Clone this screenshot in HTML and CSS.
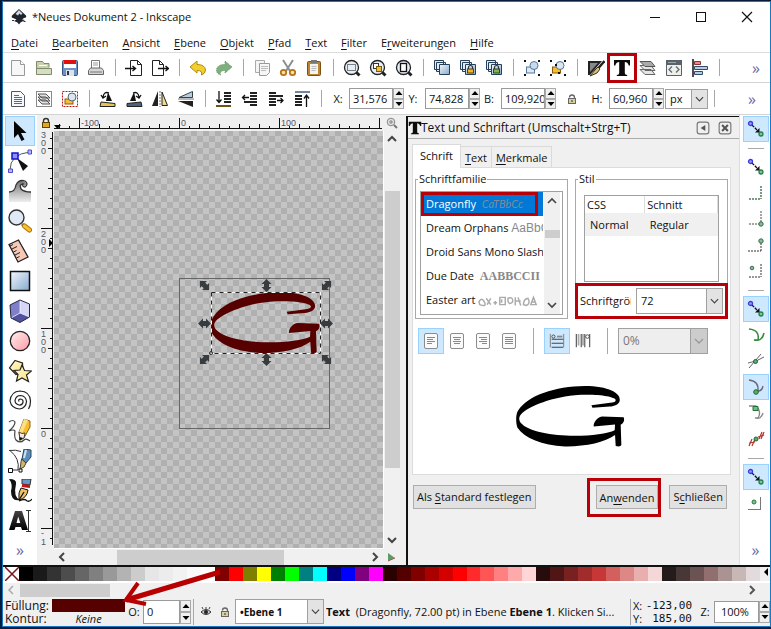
FILE: index.html
```html
<!DOCTYPE html>
<html lang="de">
<head>
<meta charset="utf-8">
<title>*Neues Dokument 2 - Inkscape</title>
<link rel="stylesheet" href="styles.css">
</head>
<body>
<svg class="defs" aria-hidden="true">
  <defs>
    <linearGradient id="blue" x1="0" y1="0" x2="1" y2="1"><stop offset="0" stop-color="#f2f7fc"/><stop offset="1" stop-color="#86aace"/></linearGradient>
    <linearGradient id="pink" x1="0" y1="0" x2="1" y2="1"><stop offset="0" stop-color="#fff0f0"/><stop offset="1" stop-color="#ff9aa4"/></linearGradient>
    <linearGradient id="yellow" x1="0" y1="0" x2="1" y2="1"><stop offset="0" stop-color="#fffbd8"/><stop offset="1" stop-color="#fbe07a"/></linearGradient>
    <linearGradient id="fade" x1="0" y1="0" x2="0" y2="1"><stop offset="0" stop-color="#777"/><stop offset="1" stop-color="#eee"/></linearGradient>
    <linearGradient id="dark" x1="0" y1="0" x2="0" y2="1"><stop offset="0" stop-color="#444"/><stop offset="1" stop-color="#000"/></linearGradient>
    <symbol id="letter-g" viewBox="120 92 340 194"><path d="M350 155L412 147Q423 145 423 139C420 128 360 120 300 125C220 132 150 165 136 185C131 192 132 200 137 208C160 235 230 247 300 247C350 247 400 240 420 230L421 213L357 219C355 210 365 192 382 189L447 191Q453 205 438 214L440 275Q438 281 423 278L421 245C390 268 330 280 270 279C200 275 150 255 127 222C122 205 122 180 130 170C160 125 240 98 330 97C400 97 440 118 435 142C432 152 420 158 405 159L353 163Z" fill="currentColor"/></symbol>
    <symbol id="snap" viewBox="0 0 18 18"><path d="M5 5l7 7" stroke="#111" stroke-width="1.300" stroke-dasharray="3 1"/><path d="M12.500 8v4.500H8z" fill="#111"/><circle cx="3.500" cy="3.500" r="2" fill="#9a9aff" stroke="#3b3bd6" stroke-width="1.300"/><circle cx="14" cy="14" r="2" fill="#7fc4a0" stroke="#23804a" stroke-width="1.300"/></symbol>
    <symbol id="arrow2" viewBox="0 0 14 14"><path d="M7 .5L12 5.500H9.500V8.500H12L7 13.500L2 8.500H4.500V5.500H2Z" fill="#383c3e"/></symbol>
    <symbol id="stack" viewBox="0 0 18 18"><path d="M1.500 1.500h9v9h-9zM3.500 3.500h9v9h-9z" fill="#e4edf7" stroke="#27405a"/><path d="M6.500 5.500h10v10h-10z" fill="url(#blue)" stroke="#27405a"/></symbol>
    <symbol id="lens" viewBox="0 0 18 18"><path d="M13 13l3.500 3.500" stroke="#222" stroke-width="3"/><circle cx="8.500" cy="8.500" r="7" fill="#e5edf5" stroke="#222" stroke-width="1.300"/></symbol>
    <symbol id="chevron" viewBox="0 0 10 10"><path d="M1 3l4 4l4-4" fill="none" stroke="currentColor" stroke-width="1.300"/></symbol>
    <symbol id="up" viewBox="0 0 8 6"><path d="M4 1l3.500 4h-7z"/></symbol>
    <symbol id="down" viewBox="0 0 8 6"><path d="M4 5l3.500-4h-7z"/></symbol>
    <symbol id="page-lines" viewBox="0 0 16 18"><rect x="1.500" y="1.500" width="13" height="15" rx="1.500" fill="#fafafa" stroke="#8c8c8c"/></symbol>
    <symbol id="padlock" viewBox="0 0 12 12"><path d="M3.500 4.500a2.500 2.500 0 0 1 5 0V6" fill="none" stroke="#666" stroke-width="1.300"/><rect x="2.500" y="5.500" width="7" height="5" fill="#d8cfa0" stroke="#666"/><path d="M6 7v2" stroke="#333"/></symbol>
    <symbol id="lockdot" viewBox="0 0 18 18"><path d="M9.500 10V8.500a2 2 0 0 1 4 0V10" fill="none" stroke="#333" stroke-width="1.200"/></symbol>
    <symbol id="corner-dots" viewBox="0 0 18 18"><path d="M1 1h2v2H1zM15 1h2v2h-2zM1 15h2v2H1zM15 15h2v2h-2z" fill="#111"/></symbol>
  </defs>
</svg>

<div class="window">
  <header class="titlebar">
    <svg class="logo" viewBox="0 0 16 16"><path d="M8 0L15 6.500Q16 8.500 13 9L11 10.500L14 11L9.500 13.500L8 15.500L6.500 13.500L3 12L5.500 10.500L2 9Q0 8.500 1 6.500Z" fill="#20242c"/><path d="M8 1L11.500 4.500L10 6L8.500 4.500L7 6.500L4.500 5Z" fill="#cfd8e4"/><path d="M1 11.500h2M12.500 12.500h2" stroke="#333"/></svg>
    <h1>*Neues Dokument 2 - Inkscape</h1>
    <div class="winbtns">
      <button aria-label="Minimieren"><svg viewBox="0 0 12 12"><path d="M1 6.500h10" stroke="#111"/></svg></button>
      <button aria-label="Maximieren"><svg viewBox="0 0 12 12"><rect x="1.500" y="1.500" width="9" height="9" fill="none" stroke="#111"/></svg></button>
      <button aria-label="Schließen"><svg viewBox="0 0 12 12"><path d="M1 1l10 10M11 1L1 11" stroke="#111" stroke-width="1.200"/></svg></button>
    </div>
  </header>

  <nav class="menubar">
    <a href="#"><u>D</u>atei</a><a href="#"><u>B</u>earbeiten</a><a href="#"><u>A</u>nsicht</a><a href="#"><u>E</u>bene</a><a href="#"><u>O</u>bjekt</a><a href="#"><u>P</u>fad</a><a href="#"><u>T</u>ext</a><a href="#"><u>F</u>ilter</a><a href="#">E<u>r</u>weiterungen</a><a href="#"><u>H</u>ilfe</a>
  </nav>

  <div class="toolbar commands">
    <button aria-label="Neu"><svg viewBox="0 0 18 18"><path d="M2.500 1.500h9l4 4v11h-13z" fill="#f7f7f7" stroke="#999"/><path d="M11.500 1.500v4h4" fill="#fff" stroke="#999"/></svg></button>
    <button aria-label="Öffnen"><svg viewBox="0 0 18 18"><path d="M1.500 15.500v-13h6l1.500 2h5v4" fill="#c9d0b0" stroke="#7f8a6a"/><path d="M1.500 15.500v-6h15v6z" fill="#d6ddc2" stroke="#7f8a6a"/><path d="M4 6.500h8" stroke="#fff"/></svg></button>
    <button aria-label="Speichern"><svg viewBox="0 0 18 18"><rect x="1.500" y="1.500" width="15" height="15" rx="1" fill="#6d93c6" stroke="#35547f"/><path d="M3 1h12v4H3z" fill="#e01010"/><path d="M3 5h12v4H3z" fill="#fff"/><path d="M5 11h8v6H5z" fill="#dfe3e8"/><path d="M6 12h2v4H6z" fill="#26364a"/></svg></button>
    <button aria-label="Drucken"><svg viewBox="0 0 18 18"><path d="M4.500 9V1.500h8V9" fill="#fff" stroke="#777"/><path d="M6 4h5M6 6h5" stroke="#999"/><path d="M1.500 15.500v-4l2-2.500h11l2 2.500v4z" fill="#d5d5d5" stroke="#666"/><path d="M3 13h12" stroke="#777"/></svg></button>
    <span class="vsep"></span>
    <button aria-label="Importieren"><svg viewBox="0 0 18 18"><path d="M5.500 1.500h7l4 4v11h-11z" fill="#fff" stroke="#222"/><path d="M12.500 1.500v4h4" fill="none" stroke="#222"/><path d="M0 9.500h10M7.500 7l3 2.500l-3 2.500" stroke="#111" stroke-width="1.400" fill="none"/></svg></button>
    <button aria-label="Exportieren"><svg viewBox="0 0 18 18"><path d="M1.500 1.500h7l4 4v11h-11z" fill="#fff" stroke="#222"/><path d="M8.500 1.500v4h4" fill="none" stroke="#222"/><path d="M7 9.500h10M14.500 7l3 2.500l-3 2.500" stroke="#111" stroke-width="1.400" fill="none"/></svg></button>
    <span class="vsep"></span>
    <button aria-label="Rückgängig"><svg viewBox="0 0 18 18"><path d="M1 8L8 2v3.500q8 0 8.500 5.500q0 3.500-4 5q1.500-4.500-4.500-4.500V14z" fill="#f3cf2e" stroke="#b08a10"/></svg></button>
    <button aria-label="Wiederherstellen"><svg viewBox="0 0 18 18"><path d="M17 8L10 2v3.500q-8 0-8.500 5.500q0 3.500 4 5Q4 11.500 10 11.500V14z" fill="#7fae7f" stroke="#5e8f62" stroke-dasharray="1 1"/></svg></button>
    <span class="vsep"></span>
    <button aria-label="Kopieren"><svg viewBox="0 0 18 18"><path d="M2.500 1.500h9v12h-9z" fill="#f4f4f4" stroke="#aaa"/><path d="M6.500 4.500h10v9l-3 3h-7z" fill="#f6f6f6" stroke="#999"/><path d="M8 7.500h7M8 9.500h7M8 11.500h5" stroke="#bbb"/></svg></button>
    <button aria-label="Ausschneiden"><svg viewBox="0 0 18 18"><path d="M4 1l7 11M14 1L7 12" stroke="#8a8f96" stroke-width="2"/><circle cx="4.500" cy="13.500" r="2.700" fill="#f6dfb4" stroke="#b87414" stroke-width="1.800"/><circle cx="13.500" cy="13.500" r="2.700" fill="#f6dfb4" stroke="#b87414" stroke-width="1.800"/></svg></button>
    <button aria-label="Einfügen"><svg viewBox="0 0 18 18"><rect x="2.500" y="2.500" width="13" height="14" rx="1" fill="#b98436" stroke="#7c4f12"/><path d="M5 5h8v10H5z" fill="#f3f3f0"/><path d="M6 1h6v3H6z" fill="#777"/><path d="M6.500 7.500h5M6.500 9.500h5M6.500 11.500h4" stroke="#bbb"/></svg></button>
    <span class="vsep"></span>
    <button aria-label="Auswahl zoomen"><svg viewBox="0 0 18 18"><use href="#lens"/><rect x="4.500" y="5.500" width="8" height="6" fill="none" stroke="#111" stroke-dasharray="1 1"/></svg></button>
    <button aria-label="Zeichnung zoomen"><svg viewBox="0 0 18 18"><use href="#lens"/><rect x="4.500" y="4.500" width="5" height="5" fill="#fff" stroke="#333"/><rect x="7.500" y="7.500" width="5" height="5" fill="#f2bc3c" stroke="#7c5a10"/></svg></button>
    <button aria-label="Seite zoomen"><svg viewBox="0 0 18 18"><use href="#lens"/><rect x="5.500" y="4.500" width="6" height="8" fill="#fff" stroke="#111" stroke-width="1.300"/></svg></button>
    <span class="vsep"></span>
    <button aria-label="Duplizieren"><svg viewBox="0 0 18 18"><use href="#stack"/></svg></button>
    <button aria-label="Klonen"><svg viewBox="0 0 18 18"><use href="#stack"/><rect x="8.500" y="10" width="6" height="4" fill="#f3b81c" stroke="#5c430a"/><use href="#lockdot"/></svg></button>
    <button aria-label="Klonverbindung auftrennen"><svg viewBox="0 0 18 18"><use href="#stack"/><rect x="8.500" y="10" width="6" height="4" fill="#7cb650" stroke="#2b4b12"/><use href="#lockdot"/></svg></button>
    <span class="vsep"></span>
    <button aria-label="Gruppieren"><svg viewBox="0 0 18 18"><rect x="3.500" y="8" width="8" height="6" fill="#dce8f4" stroke="#56779c"/><circle cx="11" cy="6.500" r="4" fill="#c8daec" stroke="#56779c"/><use href="#corner-dots"/></svg></button>
    <button aria-label="Gruppierung aufheben"><svg viewBox="0 0 18 18"><rect x="3.500" y="8" width="8" height="6" fill="#f8bd2a" stroke="#8a5b08"/><circle cx="11" cy="6.500" r="4" fill="#dbe6ef" stroke="#56779c"/><use href="#corner-dots"/><path d="M6 5h2v2H6zM9 13h2v2H9z" fill="#111"/></svg></button>
    <span class="vsep"></span>
    <button aria-label="Füllung und Kontur"><svg viewBox="0 0 18 18"><path d="M1 2h14L3 16H1z" fill="#222"/><path d="M3 4h8L3 13z" fill="#888"/><path d="M17.500 2l-6 7" stroke="#222" stroke-width="2.500"/><path d="M11 8l2 2l-3 4l-7 3l5-6z" fill="#e3b976" stroke="#332"/></svg></button>
    <button class="marked" aria-label="Text und Schriftart"><svg viewBox="0 0 18 18"><path d="M1 1h16v5.500h-1.300Q15 3 11.800 3V14q0 1.800 2.400 2v1H3.800v-1q2.400-.2 2.400-2V3Q3 3 2.300 6.500H1z" fill="#0b0b0b"/></svg></button>
    <button aria-label="Ebenen"><svg viewBox="0 0 18 18"><path d="M1 10.500h11l4 5H6zM1 6.500h11l4 5H6z" fill="#e5e5e5" stroke="#666"/><path d="M1 2.500h11l4 5H6z" fill="#aaa" stroke="#555"/></svg></button>
    <button aria-label="XML-Editor"><svg viewBox="0 0 18 18"><path d="M1.500 1.500h15v15h-15z" fill="#eef0ea" stroke="#596068"/><path d="M1 1h16v5H1z" fill="#59616a"/><path d="M3 3.500h8" stroke="#9aa"/><path d="M7 7.500L4 10.500l3 3M11 7.500l3 3l-3 3" fill="none" stroke="#667" stroke-width="1.300"/></svg></button>
    <button aria-label="Ausrichten"><svg viewBox="0 0 18 18"><path d="M2 0v18" stroke="#111" stroke-width="1.500"/><path d="M3.500 2.500h6v3h-6z" fill="#e88" stroke="#833"/><path d="M3.500 7.500h13v3h-13zM3.500 12.500h8v3h-8z" fill="#b7cde4" stroke="#334b6a"/></svg></button>
    <span class="vsep"></span>
    <span class="more">»</span>
  </div>

  <div class="toolbar controls">
    <button aria-label="Alles auswählen"><svg viewBox="0 0 18 18"><path d="M2.500 1.500h9l4 4v11h-13z" fill="#f7fafd" stroke="#556"/><path d="M5 5.500h5M5 7.500h8M5 9.500h8M5 11.500h8M5 13.500h8" stroke="#3c6ea8"/></svg></button>
    <button aria-label="In allen Ebenen auswählen"><svg viewBox="0 0 18 18"><rect x="1.500" y="1.500" width="15" height="15" fill="none" stroke="#111" stroke-dasharray="1 1"/><path d="M3 10h8l4 4H7zM3 7h8l4 4H7zM3 4h8l4 4H7z" fill="#e2e2e2" stroke="#555"/></svg></button>
    <button aria-label="Auswahl aufheben"><svg viewBox="0 0 18 18"><rect x="1.500" y="1.500" width="15" height="15" fill="none" stroke="#c01818" stroke-dasharray="2 1"/><rect x="4" y="9" width="8" height="5" fill="#f5bd3a" stroke="#8a5b08"/><circle cx="11" cy="7" r="4" fill="#dbe6ef" stroke="#567"/></svg></button>
    <span class="vsep"></span>
    <button aria-label="Gegen den Uhrzeigersinn drehen"><svg viewBox="0 0 18 18"><path d="M9 2l4 9H7z" fill="#111"/><path d="M2 12l14 1.500v3H1z" fill="#e9c254" stroke="#222"/><path d="M10 3Q5 1 4 7M2 5l2 3l3-2" fill="none" stroke="#111" stroke-width="1.300"/></svg></button>
    <button aria-label="Im Uhrzeigersinn drehen"><svg viewBox="0 0 18 18"><path d="M9 2L5 11h6z" fill="#111"/><path d="M16 12L2 13.500v3h15z" fill="#4e6478" stroke="#222"/><path d="M8 3Q13 1 14 7M16 5l-2 3l-3-2" fill="none" stroke="#111" stroke-width="1.300"/></svg></button>
    <button aria-label="Horizontal spiegeln"><svg viewBox="0 0 18 18"><path d="M7 1v15H1z" fill="#222"/><path d="M11 2l5.500 13.500H11z" fill="#f4d98a" stroke="#222"/><path d="M9 1v16" stroke="#777" stroke-dasharray="2 1"/></svg></button>
    <button aria-label="Vertikal spiegeln"><svg viewBox="0 0 18 18"><path d="M15.500 1.500v6H2z" fill="#b9cde2" stroke="#344"/><path d="M16 17v-6H1z" fill="#222"/><path d="M1 9h16" stroke="#777"/></svg></button>
    <span class="vsep"></span>
    <button aria-label="Ganz nach unten"><svg viewBox="0 0 18 18"><path d="M9 3h7M9 6h7M9 9h7M9 12h7" stroke="#222" stroke-width="2"/><path d="M1 16h15" stroke="#6a5418" stroke-width="2"/><path d="M4 1v11M1.500 9.500L4 12.500l2.500-3" fill="none" stroke="#111" stroke-width="1.300"/></svg></button>
    <button aria-label="Nach unten"><svg viewBox="0 0 18 18"><path d="M9 3h7M9 6h7M9 9h7M3 12h13M9 15h7" stroke="#222" stroke-width="2"/><path d="M8 7.500H2M4 5L1.500 7.500L4 10" fill="none" stroke="#111" stroke-width="1.300"/></svg></button>
    <button aria-label="Nach oben"><svg viewBox="0 0 18 18"><path d="M2 3h7M2 6h14M2 9h7M2 12h7M2 15h7" stroke="#222" stroke-width="2"/><path d="M10 10.500h6M13.500 8l2.500 2.500L13.500 13" fill="none" stroke="#111" stroke-width="1.300"/></svg></button>
    <button aria-label="Ganz nach oben"><svg viewBox="0 0 18 18"><path d="M2 2h15" stroke="#6d87a5" stroke-width="2"/><path d="M2 6h7M2 9h7M2 12h7M2 15h7" stroke="#222" stroke-width="2"/><path d="M13.500 17V6M11 8.500L13.500 5L16 8.500" fill="none" stroke="#111" stroke-width="1.300"/></svg></button>
    <span class="vsep"></span>
    <label for="fx">X:</label><span class="spin"><input id="fx" value="31,576"><span class="arrows"><button aria-label="Mehr"><svg><use href="#up"/></svg></button><button aria-label="Weniger"><svg><use href="#down"/></svg></button></span></span>
    <label for="fy">Y:</label><span class="spin"><input id="fy" value="74,828"><span class="arrows"><button aria-label="Mehr"><svg><use href="#up"/></svg></button><button aria-label="Weniger"><svg><use href="#down"/></svg></button></span></span>
    <label for="fb">B:</label><span class="spin"><input id="fb" value="109,920"><span class="arrows"><button aria-label="Mehr"><svg><use href="#up"/></svg></button><button aria-label="Weniger"><svg><use href="#down"/></svg></button></span></span>
    <button class="ratio" aria-label="Verhältnis sperren"><svg class="tiny" viewBox="0 0 12 12"><use href="#padlock"/></svg></button>
    <label for="fh">H:</label><span class="spin"><input id="fh" value="60,960"><span class="arrows"><button aria-label="Mehr"><svg><use href="#up"/></svg></button><button aria-label="Weniger"><svg><use href="#down"/></svg></button></span></span>
    <span class="combo unit"><select aria-label="Einheit"><option>px</option></select><svg viewBox="0 0 10 10"><use href="#chevron"/></svg></span>
    <span class="vsep"></span>
    <span class="more">»</span>
  </div>

  <main class="workspace">
    <div class="toolbox">
      <button class="on" aria-label="Auswahlwerkzeug"><svg viewBox="0 0 24 24"><path d="M6 2v17l4-4l3.500 7l3-1.500L13 14h5.500z" fill="#050505"/></svg></button>
      <button aria-label="Knoten"><svg viewBox="0 0 24 24"><path d="M2 21Q2 5 22 3" fill="none" stroke="#555"/><path d="M9 9l11 8l-5 5z" fill="#111"/><path d="M4 4h6v6H4z" fill="#8e8eff" stroke="#1515c8" stroke-width="1.500"/><path d="M20 1h3.500v4H20zM.5 20h4v3.500h-4z" fill="#b9b9ff" stroke="#4a4ad2"/></svg></button>
      <button aria-label="Modellieren"><svg viewBox="0 0 24 24"><path d="M1 13Q8 12 8 7Q11 0 17 3q3 3-1 4q-2-3-3 0q0 5 5 6h5v10H1z" fill="url(#fade)"/><path d="M1 13Q7 13 8 6Q11 0 17 2Q21 5 17 8Q14 8 15 5Q11 5 13 10Q16 13 23 13" fill="none" stroke="#333" stroke-width="1.300"/></svg></button>
      <button aria-label="Zoom"><svg viewBox="0 0 24 24"><path d="M14 15l3 3" stroke="#777" stroke-width="3"/><path d="M16.500 17l5 4" stroke="#a66900" stroke-width="5" stroke-linecap="round"/><path d="M16.500 17l5 4" stroke="#fac02c" stroke-width="3.500" stroke-linecap="round"/><circle cx="8.500" cy="8.500" r="7.500" fill="#dfeaf5" stroke="#333" stroke-width="1.400"/></svg></button>
      <button aria-label="Messen"><svg viewBox="0 0 24 24"><path d="M1 5.500L10.500 1L20 18L10 23z" fill="#f6c8b5" stroke="#222" stroke-width="1.300"/><path d="M2 7l3-1.500M4 10l5-2.500M5.500 13l3-1.500M7 16l5-2.500M8.500 19l3-1.500" stroke="#222"/></svg></button>
      <button aria-label="Rechteck"><svg viewBox="0 0 24 24"><rect x="2.500" y="2.500" width="19" height="19" fill="url(#blue)" stroke="#111" stroke-width="1.500"/></svg></button>
      <button aria-label="3D-Box"><svg viewBox="0 0 24 24"><path d="M2 6L12 1l9.500 4v13L12 23.500L3 19z" fill="#d5d5f6"/><path d="M2 6l10-5v13l-9 5z" fill="#8080c9"/><path d="M3 19l9-5l9.500 4L12 23.500z" fill="#5151a0"/><path d="M12 1v13M3 19l9-5l9.500 4" stroke="#fff" stroke-width=".7" fill="none"/><path d="M2 6L12 1l9.500 4v13L12 23.500L3 19z" fill="none" stroke="#26263e"/></svg></button>
      <button aria-label="Ellipse"><svg viewBox="0 0 24 24"><circle cx="12" cy="12" r="9.700" fill="url(#pink)" stroke="#222" stroke-width="1.300"/></svg></button>
      <button aria-label="Stern"><svg viewBox="0 0 24 24"><path d="M7 1.500L14.500 4L15 13L8 15.500L1.500 9z" fill="url(#yellow)" stroke="#222" stroke-width="1.200"/><path d="M14 6l2.500 5.500l7 .5l-5 4l2 6.500l-6.500-3.500l-5.500 3l1.500-6.500L6 11.500l6-.5z" fill="url(#yellow)" stroke="#222" stroke-width="1.200"/></svg></button>
      <button aria-label="Spirale"><svg viewBox="0 0 24 24"><path d="M11 12.500q-1-2.500 1.500-2.500q3 .5 2.500 3.500q-1 3-4 2.500Q7 15 7 11.500Q8 6.500 12.500 6.500Q18 7 18.500 12.500Q18 19 11.500 20Q3.500 19.500 2 12Q3 2.500 12 2Q22 2.500 22.500 12q0 5-2 8" fill="none" stroke="#222" stroke-width="1.200"/></svg></button>
      <button aria-label="Freihand"><svg viewBox="0 0 24 24"><path d="M1 3q4-3 6 0q0 4-6 9q5-2 6 0q-1 7 1 9q4 4 8 0q2-2 6 1" fill="none" stroke="#444" stroke-width="1.200"/><path d="M16 0l6 2v6l-6 11l-4 2l-1-8z" fill="#f7bd2d" stroke="#8a6512"/><path d="M16 0l-5 13l3 2L20 1z" fill="#fbe08a"/><path d="M11 13l3 1.500l3-.5l-1 5l-4 2z" fill="#f7ecd8" stroke="#444"/><path d="M11.500 18v4l3.500-3z" fill="#111"/></svg></button>
      <button aria-label="Bézier"><svg viewBox="0 0 24 24"><path d="M1 1.500q7-1 12 1M2 1.500q10 8 8 19.500H3" fill="none" stroke="#333"/><path d="M16 0l7 1v7l-5 6l-4-4z" fill="#5b8db8" stroke="#274660"/><path d="M18 1l-2 8" stroke="#cfe2f2" stroke-width="2"/><path d="M13.500 10l4.500 4l-2 4l-4 2z" fill="#d7b46c" stroke="#443"/><path d="M.5 19.500h4v4h-4zM11 20h3v3h-3z" fill="#fff" stroke="#111"/></svg></button>
      <button aria-label="Kalligrafie"><svg viewBox="0 0 24 24"><path d="M1 0q8 0 7 5q-3 13 4 16q-9 2-9-9Q5 5 1 0z" fill="#111"/><path d="M14 0h9l-1 6l-8-1z" fill="#679bc6" stroke="#333"/><path d="M14 6.500l8 1" stroke="#c01515" stroke-width="3"/><path d="M13 9l7 2q-1 8-9 10q-1-8 2-12z" fill="#efc268" stroke="#111"/><path d="M11 21l5-8M11 22q6-3 8 0q3 1 5-2" stroke="#111" fill="none" stroke-width="1.300"/></svg></button>
      <button aria-label="Text"><svg viewBox="0 0 24 24"><path d="M7 2h7l6 19h-6l-1-3H7.500l-1 3H1zM10.200 7.500L8.500 14h3.800z" fill="url(#dark)" fill-rule="evenodd"/><path d="M18 1.500h5M18 22.500h5M20.500 2v20" stroke="#333"/></svg></button>
      <span class="more">»</span>
    </div>

    <div class="canvas-area">
      <div class="corner"><svg class="tiny" viewBox="0 0 12 12"><path d="M3.500 6V4a2.500 2.500 0 0 1 5 0v2" fill="none" stroke="#333" stroke-width="1.400"/><rect x="2.500" y="5.500" width="7" height="5" fill="#e2a81d" stroke="#5c430a"/></svg></div>
      <svg class="ruler-h">
        <defs><pattern id="th" x="25" y="0" width="20" height="14" patternUnits="userSpaceOnUse"><path d="M.5 9v5M10.500 11v3" stroke="#111"/></pattern></defs>
        <rect fill="url(#th)" width="100%" height="14"/>
        <path d="M25.500 3v11M125.500 3v11M225.500 3v11M325.500 3v11M0 13.500h328" stroke="#111"/>
        <text x="27" y="11">-100</text><text x="127" y="11">0</text><text x="227" y="11">100</text>
        <path d="M0 10h7l-3.500 4z"/>
      </svg>
      <button class="zoomfix" aria-label="Zoom"><svg class="tiny" viewBox="0 0 12 12"><path d="M8 8l3 3" stroke="#777" stroke-width="2"/><circle cx="5" cy="5" r="3.800" fill="#ddd" stroke="#888"/><path d="M3 5h4M5 3v4" stroke="#888"/></svg></button>
      <svg class="ruler-v">
        <defs><pattern id="tv" x="0" y="-3" width="16" height="20" patternUnits="userSpaceOnUse"><path d="M11 .5h5M13 10.500h3" stroke="#111"/></pattern></defs>
        <rect fill="url(#tv)" width="16" height="100%"/>
        <path d="M4 97.500h12M4 197.500h12M4 297.500h12M4 397.500h12M15.500 1V414" stroke="#111"/>
        <text x="4" y="7">3</text><text x="4" y="15">0</text><text x="4" y="23">0</text>
        <text x="4" y="106">2</text><text x="4" y="114">0</text><text x="4" y="122">0</text>
        <text x="4" y="206">1</text><text x="4" y="214">0</text><text x="4" y="222">0</text>
        <text x="4" y="306">0</text><text x="4" y="405">-</text><text x="4" y="414">1</text>
        <path d="M12 108v8l4-4z"/>
      </svg>
      <svg class="canvas" role="img" aria-label="Zeichenfläche">
        <defs><pattern id="checks" width="12" height="12" patternUnits="userSpaceOnUse"><path fill="#c4c4c4" d="M0 0h12v12H0z"/><path fill="#b0b0b0" d="M5 0h6v5H5zM5 11h6v1H5zM0 5h5v6H0zM11 5h1v6h-1z"/></pattern></defs>
        <rect width="100%" height="100%" fill="url(#checks)"/>
        <g transform="translate(-54 -131)">
          <rect x="179.500" y="278.500" width="150" height="150" fill="none" stroke="#666"/>
          <use href="#letter-g" x="210" y="290.667" width="113.333" height="64.667"/>
          <rect x="211.500" y="292.500" width="109" height="61" fill="none" stroke="#fff"/>
          <rect x="211.500" y="292.500" width="109" height="61" fill="none" stroke="#222" stroke-dasharray="4 4"/>
          <circle cx="211" cy="353" r="1.500" fill="none" stroke="#333"/>
          <use href="#arrow2" x="259.500" y="278.500" width="14" height="14"/>
          <use href="#arrow2" x="259.500" y="352.500" width="14" height="14"/>
          <use href="#arrow2" x="-7" y="-7" width="14" height="14" transform="translate(204.500 323.500) rotate(90)"/>
          <use href="#arrow2" x="-7" y="-7" width="14" height="14" transform="translate(326.500 323.500) rotate(90)"/>
          <use href="#arrow2" x="-7" y="-7" width="14" height="14" transform="translate(204.500 285.500) rotate(-45)"/>
          <use href="#arrow2" x="-7" y="-7" width="14" height="14" transform="translate(326.500 359.500) rotate(-45)"/>
          <use href="#arrow2" x="-7" y="-7" width="14" height="14" transform="translate(326.500 285.500) rotate(45)"/>
          <use href="#arrow2" x="-7" y="-7" width="14" height="14" transform="translate(204.500 359.500) rotate(45)"/>
        </g>
      </svg>
      <div class="scroll-v"><svg viewBox="0 0 10 10"><path d="M1 7l4-4l4 4" fill="none" stroke="#444" stroke-width="2"/></svg><i class="before"></i><i class="thumb"></i><i class="after"></i><svg viewBox="0 0 10 10"><path d="M1 3l4 4l4-4" fill="none" stroke="#444" stroke-width="2"/></svg></div>
      <div class="scroll-h"><svg viewBox="0 0 10 10"><path d="M7 1L3 5l4 4" fill="none" stroke="#444" stroke-width="2"/></svg><i class="before"></i><i class="thumb"></i><i class="after"></i><svg viewBox="0 0 10 10"><path d="M3 1l4 4l-4 4" fill="none" stroke="#444" stroke-width="2"/></svg></div>
      <div class="cms"><svg class="tiny" viewBox="0 0 12 12"><path d="M3 2l7 5l-7 3z" fill="#5c9c68"/><path d="M3 10l7-3" stroke="#a55"/></svg></div>
    </div>

    <section class="dock">
      <header>
        <svg viewBox="0 0 18 18"><path d="M1 1h16v5.500h-1.300Q15 3 11.800 3V14q0 1.800 2.400 2v1H3.800v-1q2.400-.2 2.400-2V3Q3 3 2.300 6.500H1z" fill="#0b0b0b"/></svg>
        <h2>Text und Schriftart (Umschalt+Strg+T)</h2>
        <button aria-label="Minimieren"><svg viewBox="0 0 12 12"><rect x="1" y="1" width="10" height="10" rx="2" fill="none" stroke="#777"/><path d="M8 3.500v5L4 6z" fill="#555"/></svg></button>
        <button aria-label="Schließen"><svg viewBox="0 0 12 12"><rect x="1" y="1" width="10" height="10" rx="2" fill="none" stroke="#777"/><path d="M3.500 3.500l5 5M8.500 3.500l-5 5" stroke="#555" stroke-width="1.800"/></svg></button>
      </header>
      <div class="tabs" role="tablist">
        <button role="tab" class="current">Schrift</button><button role="tab"><u>T</u>ext</button><button role="tab"><u>M</u>erkmale</button>
      </div>
      <div class="panel">
        <div class="groups">
          <fieldset>
            <legend>Schriftfamilie</legend>
            <div class="fontbox">
              <ul role="listbox" aria-label="Schriftfamilie">
                <li class="selected" role="option">Dragonfly <span class="s-dragon">CaTBbCc</span></li>
                <li role="option">Dream Orphans <span class="s-dream">AaBbC</span></li>
                <li role="option">Droid Sans Mono Slash</li>
                <li role="option">Due Date <span class="s-due">AABBCCII</span></li>
                <li role="option">Easter art <svg class="s-easter" viewBox="0 0 66 12"><path d="M1 7q3-6 6 0t-5 3zM9 3l5 7M14 3l-4 7M17 8h4M19 6v4M24 2h6v8h-6zM26 4v4M33 3q6-2 5 4q-4 4-5-1zM41 2v9M44 2l3 9M41 6h6M50 10q0-6 5-7q3 6-2 8zM58 10l3-8l3 8zM59 7h4" fill="none" stroke="#aaa" stroke-width="1.600"/></svg></li>
              </ul>
              <div class="listscroll"><svg viewBox="0 0 10 10"><path d="M1 7l4-4l4 4" fill="none" stroke="#444" stroke-width="1.600"/></svg><i></i><svg viewBox="0 0 10 10"><path d="M1 3l4 4l4-4" fill="none" stroke="#444" stroke-width="1.600"/></svg></div>
            </div>
          </fieldset>
          <fieldset>
            <legend>Stil</legend>
            <div class="stylebox">
              <table><thead><tr><th>CSS</th><th>Schnitt</th></tr></thead><tbody><tr><td>Normal</td><td>Regular</td></tr></tbody></table>
            </div>
            <div class="sizerow"><label for="size">Schriftgröße</label><span class="combo size"><select id="size"><option>72</option></select><svg viewBox="0 0 10 10"><use href="#chevron"/></svg></span></div>
          </fieldset>
        </div>
        <div class="align">
          <button class="on" aria-label="Linksbündig"><svg viewBox="0 0 16 18"><use href="#page-lines"/><path d="M4 5.500h8M4 7.500h6M4 9.500h8M4 11.500h5" stroke="#888"/></svg></button>
          <button aria-label="Zentriert"><svg viewBox="0 0 16 18"><use href="#page-lines"/><path d="M4 5.500h8M5 7.500h6M4 9.500h8M5 11.500h6" stroke="#888"/></svg></button>
          <button aria-label="Rechtsbündig"><svg viewBox="0 0 16 18"><use href="#page-lines"/><path d="M4 5.500h8M6 7.500h6M4 9.500h8M7 11.500h5" stroke="#888"/></svg></button>
          <button aria-label="Blocksatz"><svg viewBox="0 0 16 18"><use href="#page-lines"/><path d="M4 5.500h8M4 7.500h8M4 9.500h8M4 11.500h8" stroke="#888"/></svg></button>
          <span class="vsep"></span>
          <button class="on" aria-label="Horizontaler Text"><svg viewBox="0 0 18 18"><path d="M1.500 1v15M16.500 1v15" stroke="#777"/><path d="M3 7h13M3 11.500h13M3 16h13" stroke="#444" stroke-width="1.300"/><circle cx="5" cy="4" r="1.800" fill="none" stroke="#444"/><path d="M9 4h6" stroke="#888" stroke-width="2"/></svg></button>
          <button aria-label="Vertikaler Text"><svg viewBox="0 0 18 18"><path d="M1.500 1v15M7 1v15M11 1v15M16.500 1v15" stroke="#555" stroke-width="1.300"/><path d="M4 1v13M9 1v13" stroke="#aaa" stroke-width="2"/><circle cx="14" cy="4" r="2" fill="none" stroke="#444"/></svg></button>
          <span class="vsep"></span>
          <span class="combo spacing"><select aria-label="Zeilenabstand" disabled><option>0%</option></select><svg viewBox="0 0 10 10"><use href="#chevron"/></svg></span>
        </div>
        <div class="preview"><svg viewBox="0 0 340 194" role="img" aria-label="Vorschau"><use href="#letter-g" width="340" height="194"/></svg></div>
      </div>
      <footer>
        <button>Als <u>S</u>tandard festlegen</button>
        <span class="apply"><button>An<u>w</u>enden</button></span>
        <button>S<u>c</u>hließen</button>
      </footer>
    </section>

    <div class="snapbar">
      <button class="on" aria-label="Einrasten"><svg viewBox="0 0 18 18"><use href="#snap"/></svg></button>
      <span class="hsep"></span>
      <button aria-label="Rahmen"><svg viewBox="0 0 18 18"><use href="#snap"/></svg></button>
      <button aria-label="Kanten"><svg viewBox="0 0 18 18"><path d="M2 15h12M14 2v13" stroke="#7a9a82" stroke-width="2" stroke-dasharray="2 1"/></svg></button>
      <button aria-label="Ecken"><svg viewBox="0 0 18 18"><path d="M2 14h12M14 1v13" stroke="#888" stroke-width="1.500" stroke-dasharray="2 1"/><circle cx="14" cy="14" r="2.200" fill="#8ab898" stroke="#34704a"/></svg></button>
      <button aria-label="Kantenmitten"><svg viewBox="0 0 18 18"><path d="M1 15h13M14 4v11" stroke="#333" stroke-dasharray="2 1"/><circle cx="14" cy="5" r="2.200" fill="#8ab898" stroke="#34704a"/></svg></button>
      <button aria-label="Zentren"><svg viewBox="0 0 18 18"><path d="M2 15h12M14 2v13" stroke="#333" stroke-dasharray="2 1"/><circle cx="5" cy="6" r="1.800" fill="#8ab898" stroke="#34704a"/></svg></button>
      <span class="hsep"></span>
      <button class="on" aria-label="Knoten einrasten"><svg viewBox="0 0 18 18"><use href="#snap"/></svg></button>
      <button aria-label="Pfade"><svg viewBox="0 0 18 18"><path d="M2 3q11 1 9 11H7q8 2 10-7" fill="none" stroke="#2f8a3a" stroke-width="1.500"/></svg></button>
      <button aria-label="Überschneidungen"><svg viewBox="0 0 18 18"><path d="M2 16L14 2M1 11Q9 10 17 5" fill="none" stroke="#666"/><circle cx="8.500" cy="9.500" r="2" fill="#53b06a" stroke="#1e6434"/></svg></button>
      <button class="on" aria-label="Spitze Knoten"><svg viewBox="0 0 18 18"><path d="M2 2q10 1 9 11q4 0 5-5" fill="none" stroke="#667" stroke-width="1.300"/><circle cx="9" cy="14" r="2.300" fill="#53b06a" stroke="#1e6434"/></svg></button>
      <button aria-label="Glatte Knoten"><svg viewBox="0 0 18 18"><path d="M2 2h7q6 6 2 12h-3q6 2 8-5" fill="none" stroke="#888" stroke-width="1.300"/><path d="M6 2.500h5v4H6z" fill="#6fbf83" stroke="#1e7434"/></svg></button>
      <button aria-label="Linienmitten"><svg viewBox="0 0 18 18"><path d="M2 16l3-7M5 16l3-7M2 13l6-1M12 9l3-7M14 9l3-7M11 7l6-2" stroke="#b5362e" stroke-width="1.200"/><circle cx="9" cy="9" r="2" fill="#53b06a" stroke="#1e6434"/></svg></button>
      <span class="hsep"></span>
      <button class="on" aria-label="Andere"><svg viewBox="0 0 18 18"><use href="#snap"/></svg></button>
      <button aria-label="Objektmitten"><svg viewBox="0 0 18 18"><path d="M1 15.500h13M13.500 3v12" stroke="#777"/><circle cx="7" cy="8" r="2" fill="#7cc190" stroke="#2a7a3c"/></svg></button>
      <span class="more">»</span>
    </div>
  </main>

  <div class="palette">
    <button class="none" aria-label="Keine Farbe"><svg viewBox="0 0 14 14"><path d="M0 0l14 14M14 0L0 14" stroke="#7a1414" stroke-width="1.500"/></svg></button>
    <div class="swatches"></div>
    <svg class="flip" viewBox="0 0 10 10"><path d="M8 1v8L4 5z"/></svg>
  </div>
  <div class="palette-scroll"><svg viewBox="0 0 10 10"><path d="M7 1L3 5l4 4" fill="none" stroke="#aaa" stroke-width="1.500"/></svg><i></i><svg viewBox="0 0 10 10"><path d="M3 1l4 4l-4 4" fill="none" stroke="#555" stroke-width="2"/></svg></div>

  <footer class="statusbar">
    <div class="paint"><span>Füllung:</span><i class="fill"></i><span>Kontur:</span><em>Keine</em></div>
    <svg class="pointer" viewBox="0 0 100 40"><path d="M99 4L5 32" fill="none" stroke="#b80000" stroke-width="5"/><path d="M17 15L5 32L25 36" fill="none" stroke="#b80000" stroke-width="4"/></svg>
    <label for="op">O:</label><span class="spin op"><input id="op" value="0"><span class="arrows"><button aria-label="Mehr"><svg><use href="#up"/></svg></button><button aria-label="Weniger"><svg><use href="#down"/></svg></button></span></span>
    <span class="vsep"></span>
    <button class="flag" aria-label="Sichtbarkeit"><svg class="tiny" viewBox="0 0 12 12"><path d="M1 6q5-5 10 0q-5 5-10 0z" fill="#ccc" stroke="#333"/><circle cx="6" cy="6" r="2" fill="#222"/><path d="M3 3L2 1M6 3V1M9 3l1-2" stroke="#444"/></svg></button>
    <button class="flag" aria-label="Sperren"><svg class="tiny" viewBox="0 0 12 12"><use href="#padlock"/></svg></button>
    <span class="combo layer"><select aria-label="Ebene"><option>•Ebene 1</option></select><svg viewBox="0 0 10 10"><use href="#chevron"/></svg></span>
    <p class="message"><b>Text</b>&nbsp; (Dragonfly, 72.00 pt) in Ebene <b>Ebene 1</b>. Klicken Si...</p>
    <span class="vsep"></span>
    <div class="coords"><span>X:</span><code>-123,00</code><span>Y:</span><code>185,00</code></div>
    <label for="zm">Z:</label><span class="spin zm"><input id="zm" value="100%"><span class="arrows"><button aria-label="Mehr"><svg><use href="#up"/></svg></button><button aria-label="Weniger"><svg><use href="#down"/></svg></button></span></span>
  </footer>
</div>
<script src="palette.js"></script>
</body>
</html>
```
FILE: styles.css
```css
* { box-sizing: border-box; }
body {
  margin: 0;
  min-height: 100vh;
  display: flex;
  background: #041c3c;
  color: #111;
  font: 11px/16px "Open Sans", "Noto Sans", sans-serif;
}
button, input, select { font: inherit; color: inherit; padding: 0; margin: 0; border: 0; border-radius: 0; background: none; }
h1, h2, p, ul { margin: 0; padding: 0; font-size: inherit; font-weight: normal; }
svg { display: block; flex: none; }
u { text-underline-offset: 2px; }
.defs { position: absolute; width: 0; height: 0; }

.window {
  flex: 1;
  min-width: 0;
  margin: 1px 0 2px 2px;
  border: 1px solid #1778c4;
  background: #fff;
  display: flex;
  flex-direction: column;
}

.titlebar { display: flex; align-items: center; height: 30px; padding-left: 8px; font-size: 12px; }
.logo { width: 16px; height: 16px; margin-right: 5px; }
.titlebar h1 { flex: 1; font-size: 11px; }
.winbtns { display: flex; }
.winbtns button { width: 46px; height: 28px; display: grid; place-items: center; }
.winbtns svg { width: 12px; height: 12px; }

.menubar { display: flex; gap: 14px; height: 21px; align-items: center; padding: 1px 0 0 8px; border-bottom: 1px solid #dcdcdc; }
.menubar a { color: inherit; text-decoration: none; }

.toolbar { display: flex; align-items: center; padding-left: 2px; border-bottom: 1px solid #d4d4d4; }
.commands { height: 30px; }
.controls { height: 32px; }
.toolbar > button, .align button, .snapbar button { width: 26px; height: 26px; display: grid; place-items: center; flex: none; }
.toolbar > button svg, .snapbar svg { width: 18px; height: 18px; }
.vsep { flex: none; width: 12px; height: 17px; background: linear-gradient(#a8a8a8, #a8a8a8) center / 1px 100% no-repeat; }
.more { margin-left: auto; color: #6a6aa6; font-size: 16px; line-height: 26px; }
.commands .more { padding-right: 10px; }
.controls .more { padding-right: 14px; }
.marked { outline: 3px solid #b80008; outline-offset: -1px; }
svg.tiny, .toolbar > button svg.tiny { width: 12px; height: 12px; }

.controls label { width: 24px; text-align: center; flex: none; }
.controls label[for="fx"] { width: 22px; }
.controls .spin { margin-right: -3px; }
.spin { display: flex; flex: none; width: 55px; height: 21px; }
.spin input { flex: 1; width: 0; min-width: 0; border: 1px solid #9a9a9a; padding-left: 3px; background: #fff; }
.arrows { display: flex; flex-direction: column; width: 11px; }
.arrows button { flex: 1; width: 11px; border: 1px solid #aaa; background: #f0f0f0; display: grid; place-items: center; }
.arrows svg { width: 8px; height: 6px; }
.toolbar .ratio { margin-left: 6px; }
.combo { display: flex; position: relative; flex: none; }
.combo select { appearance: none; width: 100%; border: 1px solid #a0a0a0; background: #fff; padding-left: 4px; opacity: 1; }
.combo svg { position: absolute; right: 0; top: 0; width: 17px; height: 100%; padding: 0 3px; border: 1px solid #a0a0a0; background: #e3e3e3; pointer-events: none; color: #444; }
.unit { width: 43px; height: 20px; margin-left: 4px; }

.workspace { flex: 1; display: flex; min-height: 450px; background: #f0f0f0; }
.toolbox { width: 34px; flex: none; background: #fff; padding-top: 1px; display: flex; flex-direction: column; align-items: center; }
.toolbox button { width: 30px; height: 30px; display: grid; place-items: center; }
.toolbox svg { width: 24px; height: 24px; }
.toolbox .more, .snapbar .more { margin: auto 0 0; padding-bottom: 2px; }
.on { background: #cde8ff; outline: 1px solid #99d1ff; outline-offset: -1px; }

.canvas-area { flex: 1; min-width: 0; display: grid; grid-template-columns: 17px 1fr 23px; grid-template-rows: 16px 1fr 17px; }
.corner { display: grid; place-items: center; }
.ruler-h, .ruler-v, .canvas { width: 100%; height: 100%; overflow: hidden; }
.ruler-h text, .ruler-v text { font: 9px "Liberation Sans", sans-serif; fill: #556; }
.ruler-h { height: 16px; }
.zoomfix { display: grid; place-items: center start; padding-left: 3px; }
.canvas { color: #560000; }
.scroll-v { width: 17px; border-left: 1px solid #fff; display: flex; flex-direction: column; align-items: center; padding: 3px 0; }
.scroll-h { grid-column: 2; display: flex; align-items: center; padding: 0 3px; border-top: 1px solid #fff; }
.scroll-v svg, .scroll-h svg { width: 10px; height: 10px; }
.scroll-v .thumb { width: 15px; flex: 277; background: #cdcdcd; }
.scroll-v .before { flex: 47; }
.scroll-v .after { flex: 67; }
.scroll-h .thumb { height: 15px; flex: 167; background: #cdcdcd; }
.scroll-h .before { flex: 50; }
.scroll-h .after { flex: 86; }
.cms { display: grid; place-items: center start; padding-left: 2px; }

.dock { width: 333px; flex: none; margin-top: 1px; border-left: 2px solid #111; border-top: 1px solid #111; display: flex; flex-direction: column; }
.dock > header { display: flex; align-items: center; height: 22px; gap: 8px; padding-right: 7px; border-bottom: 1px solid #aaa; }
.dock > header > svg { width: 14px; height: 14px; margin-right: -9px; }
.dock > header h2 { flex: 1; font-size: 12px; }
.dock > header button svg { width: 14px; height: 14px; }
.tabs { display: flex; align-items: flex-end; height: 29px; padding: 5px 4px 0; }
.tabs button { height: 22px; padding: 0 4px; border: 1px solid #dadada; border-bottom: 0; border-left: 0; font-size: 11px; }
.tabs .current { height: 24px; padding: 0 7px 2px; background: #fff; border-left: 1px solid #dadada; position: relative; z-index: 1; }
.panel { margin: -1px 8px 0 4px; border: 1px solid #dcdcdc; background: #fff; height: 308px; padding: 3px 2px 0; display: flex; flex-direction: column; }
.groups { display: grid; grid-template-columns: 1fr 1fr; gap: 7px; }
fieldset { min-width: 0; margin: 0; padding: 4px 4px 5px; border: 1px solid #a9a9a9; height: 148px; }
legend { padding: 0 1px; margin-left: -2px; line-height: 16px; }
.fontbox { display: flex; border: 1px solid #a0a0a0; height: 124px; }
.fontbox ul { flex: 1; min-width: 0; list-style: none; overflow: hidden; }
.fontbox li { height: 24px; line-height: 24px; padding-left: 5px; white-space: nowrap; }
.selected { position: relative; background: #0078d7; color: #fff; }
.selected::after { content: ""; position: absolute; inset: 0 5px 0 0; border: 3px solid #b80008; }
.fontbox span { color: #888; margin-left: 3px; }
.fontbox .s-dragon { font: italic 11px Lato, sans-serif; color: #7e8c99; }
.fontbox .s-dream { font: 12px "Liberation Sans", sans-serif; margin-left: 0; }
.fontbox .s-due { font: bold 12px "Liberation Serif", serif; }
.fontbox .s-easter { display: inline-block; width: 60px; height: 12px; vertical-align: middle; }
.listscroll { width: 16px; margin: 0 2px 0 1px; background: #f0f0f0; display: flex; flex-direction: column; align-items: center; padding: 4px 0; }
.listscroll svg { width: 10px; height: 10px; }
.listscroll i { width: 15px; height: 8px; background: #cdcdcd; margin: 24px 0 auto; }
.stylebox { margin: 4px 4px 0; border: 1px solid #a0a0a0; height: 87px; }
table { width: 100%; border-collapse: collapse; table-layout: fixed; }
th { text-align: left; font-weight: normal; height: 17px; padding: 0 2px; border-right: 1px solid #ddd; }
th:first-child { width: 45%; }
td { height: 23px; padding: 0 5px; background: #f0f0f0; }
.sizerow { display: flex; align-items: center; justify-content: space-between; margin-top: 6px; height: 26px; outline: 3px solid #b80008; outline-offset: 2px; }
.sizerow label { width: 51px; overflow: hidden; }
.size { width: 87px; height: 26px; }
.align { display: flex; align-items: center; padding: 9px 3px 0; }
.align svg { width: 16px; height: 18px; }
.align .vsep { width: 22px; height: 26px; }
.spacing { width: 90px; height: 26px; }
.spacing select { font-size: 12px; }
.align .spacing select { background: #eee; color: #777; }
.align .spacing svg { width: 18px; height: 100%; background: #ccc; color: #999; }
.preview { flex: 1; display: grid; place-items: center; padding-top: 4px; }
.preview svg { width: 113px; height: 65px; color: #000; }
.dock footer { display: flex; align-items: center; padding: 1px 12px 0 5px; height: 43px; gap: 8px; }
.dock footer button { height: 24px; padding: 0 3px; border: 1px solid #adadad; background: #e1e1e1; }
.dock footer .apply { margin-left: auto; border: 3px solid #b80008; padding: 4px 0 5px 6px; line-height: 24px; }
.apply button { display: block; }

.snapbar { width: 31px; flex: none; background: #fff; padding: 1px 1px 0 2px; border-left: 1px solid #ddd; display: flex; flex-direction: column; align-items: center; }
.hsep { width: 16px; height: 12px; flex: none; background: linear-gradient(#a8a8a8, #a8a8a8) center / 100% 1px no-repeat; }

.palette { display: flex; border-top: 2px solid #111; height: 17px; padding-left: 2px; border-bottom: 1px solid #fff; background: #f0f0f0; }
.none { width: 14px; background: #fff; }
.none svg { width: 14px; height: 14px; }
.swatches { flex: 1; display: flex; }
.swatches button { flex: 1; }
.flip { width: 10px; height: 10px; }
.palette-scroll { display: flex; align-items: center; height: 15px; padding: 0 13px 0 3px; background: #f0f0f0; border-top: 1px solid #fff; }
.palette-scroll svg { width: 10px; height: 10px; }
.palette-scroll i { width: 90px; height: 13px; margin: 0 auto 0 4px; background: #cdcdcd; }

.statusbar { position: relative; display: flex; align-items: center; height: 29px; background: #f0f0f0; padding-left: 2px; }
.paint { display: grid; grid-template-columns: 47px 73px; grid-template-rows: 13px 13px; line-height: 13px; font-size: 12px; }
.fill { background: #560000; }
.paint em { text-align: center; font-size: 11px; }
.pointer { position: absolute; left: 118px; top: -29px; width: 100px; height: 40px; }
.statusbar label { width: 18px; text-align: center; flex: none; }
.op { width: 48px; height: 24px; }
.statusbar > .vsep { width: 5px; height: 26px; }
.flag { width: 19px; flex: none; display: grid; place-items: center; }
.layer { width: 89px; height: 25px; margin: 0 2px 0 1px; font-size: 10px; font-weight: bold; }
.message { flex: 1; min-width: 0; white-space: nowrap; overflow: hidden; text-overflow: ellipsis; }
.coords { display: grid; grid-template-columns: 12px 47px; line-height: 13px; margin-right: 4px; }
.coords code { font: 11px/13px "DejaVu Sans Mono", monospace; text-align: right; }
.zm { width: 56px; height: 22px; }
.zm input { padding-left: 6px; }
```
FILE: palette.js
```js
const colours = (
  "000000 1a1a1a 333333 4d4d4d 666666 808080 999999 b3b3b3 cccccc e6e6e6 ececec f2f2f2 f9f9f9 ffffff " +
  "800000 ff0000 808000 ffff00 008000 00ff00 008080 00ffff 000080 0000ff 800080 ff00ff " +
  "2b0000 550000 800000 aa0000 d40000 ff0000 ff2a2a ff5555 ff8080 ffaaaa ffd5d5 " +
  "280b0b 501616 782121 a02c2c c83737 d35f5f de8787 e9afaf f4d7d7 " +
  "241c1c 483737 6c5353 916f6f ac9393 c8b7b7 e3dbdb"
).split(" ");
const strip = document.querySelector(".swatches");
for (const colour of colours) {
  const swatch = document.createElement("button");
  swatch.style.background = "#" + colour;
  swatch.setAttribute("aria-label", "#" + colour);
  strip.append(swatch);
}
```
